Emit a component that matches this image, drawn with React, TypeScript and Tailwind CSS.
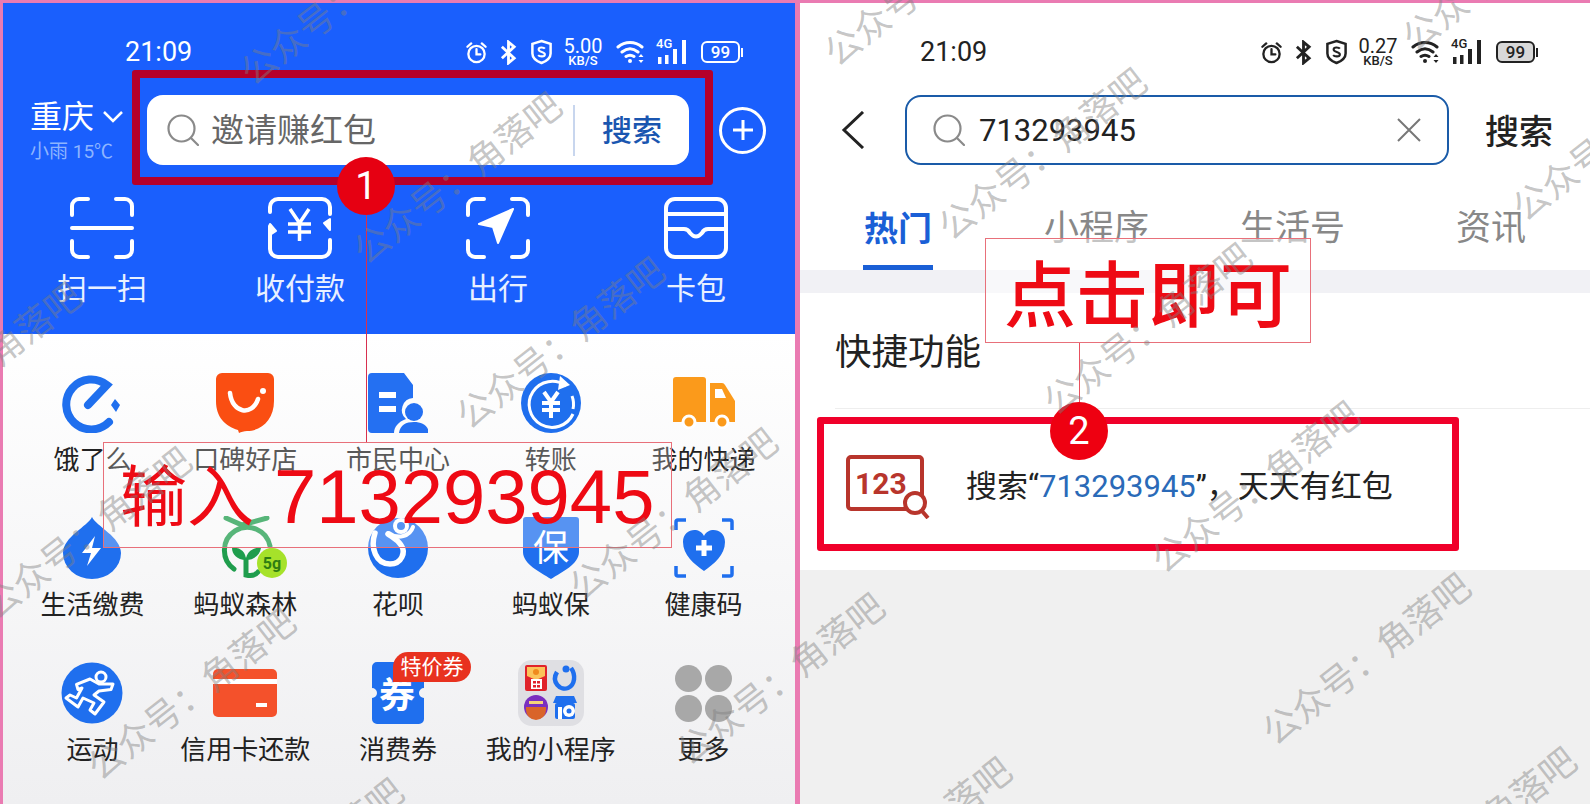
import React from "react";

function Alarm() {
  return (
    <svg viewBox="0 0 24 24" className="w-[23px] h-[25px]" fill="none" stroke="currentColor" strokeWidth="2.4">
      <circle cx="12" cy="13.5" r="8.5" />
      <path d="M12 8.500v5.500h4M2.500 6l4-3.500M21.500 6l-4-3.500" strokeLinecap="round" />
    </svg>
  );
}

function Bluetooth() {
  return (
    <svg viewBox="0 0 18 26" className="w-[17px] h-[25px]" fill="none" stroke="currentColor" strokeWidth="3">
      <path d="M2 7l13 12-6 5V2l6 5L2 19" />
    </svg>
  );
}

function ShieldS() {
  return (
    <svg viewBox="0 0 24 26" className="w-[23px] h-[26px]" fill="none" stroke="currentColor" strokeWidth="2.600">
      <path d="M12 1.500l9.500 3v10c0 5-4.500 8-9.500 10-5-2-9.500-5-9.500-10v-10z" />
      <path d="M15.500 9.500c-1-1.500-6.500-2-6.500 1 0 3 6.500 2 6.500 5 0 2.800-5.500 2.500-7 .8" strokeWidth="2.200" />
    </svg>
  );
}

function Wifi() {
  return (
    <svg viewBox="0 0 30 24" className="w-[30px] h-[24px]" fill="none" stroke="currentColor" strokeWidth="3" strokeLinecap="round">
      <path d="M2 7c7-6 17-6 24 0M6 12c5-4 11-4 16 0M10 16.500c3-2 5-2 8 0" />
      <circle cx="14" cy="21" r="2" fill="currentColor" stroke="none" />
      <path d="M25 14l2.500 3h-5zM25 23l2.500-3h-5z" fill="currentColor" stroke="none" />
    </svg>
  );
}

function Signal() {
  return (
    <div className="relative w-[33px] h-[24px]">
      <span className="absolute left-0 top-[-3px] text-[13px] leading-[14px] font-medium">4G</span>
      <svg viewBox="0 0 33 24" className="w-[33px] h-[24px]" fill="currentColor">
        <rect x="2" y="17" width="3.500" height="7" />
        <rect x="9" y="15" width="3.500" height="9" />
        <rect x="17" y="9" width="4" height="15" />
        <rect x="26" y="0" width="4" height="24" />
      </svg>
    </div>
  );
}

function StatusBar({ speed, light }: { speed: string; light: boolean }) {
  return (
    <div className={`flex items-center h-[36px] pr-[52px] ${light ? "text-white" : "text-[#222222]"}`}>
      <span className="ml-[122px] text-[27px] leading-[36px]">21:09</span>
      <div className="ml-auto flex items-center">
        <Alarm />
        <div className="ml-[12px]"><Bluetooth /></div>
        <div className="ml-[13px]"><ShieldS /></div>
        <div className="ml-[10px] w-[40px] flex flex-col items-center">
          <span className="text-[20px] leading-[17px]">{speed}</span>
          <span className="text-[13px] leading-[12px] font-medium">KB/S</span>
        </div>
        <div className="ml-[13px]"><Wifi /></div>
        <div className="ml-[10px]"><Signal /></div>
        <div className="ml-[12px] flex items-center">
          <div className={`w-[39px] h-[22px] rounded-[6px] border-2 border-current flex items-center justify-center text-[17px] leading-none font-medium ${light ? "" : "bg-[#d8d8d8]"}`}>
            99
          </div>
          <div className="ml-[1px] w-[2px] h-[9px] bg-current" />
        </div>
      </div>
    </div>
  );
}

function SearchIcon() {
  return (
    <svg viewBox="0 0 32 32" className="w-[32px] h-[32px]" fill="none" stroke="#8a8a8a" strokeWidth="2.200">
      <circle cx="14.500" cy="14.500" r="13" />
      <path d="M24 24l7 7" strokeLinecap="round" />
    </svg>
  );
}

function QuickIcon({ name }: { name: string }) {
  const corners = "M2 18V9a7 7 0 0 1 7-7h9M46 2h9a7 7 0 0 1 7 7v9M2 44v9a7 7 0 0 0 7 7h9M46 60h9a7 7 0 0 0 7-7v-9";
  return (
    <svg viewBox="0 0 64 62" className="w-[64px] h-[62px]" fill="none" stroke="white" strokeWidth="4" strokeLinecap="round" strokeLinejoin="round">
      {name === "scan" && <path d={`${corners}M2 31h60`} />}
      {name === "pay" && (
        <>
          <path d="M2 15v-5a8 8 0 0 1 8-8h44a8 8 0 0 1 8 8v7M62 43v9a8 8 0 0 1-8 8H10a8 8 0 0 1-8-8V29" />
          <path d="M62 22v11l-6-7zM2 38V27l6 7z" fill="white" strokeWidth="2" />
          <path d="M22 12l9.500 14L41 12M20 27h23M20 35h23M31.500 27v17" strokeWidth="3.500" strokeLinecap="butt" />
        </>
      )}
      {name === "go" && (
        <>
          <path d={corners} />
          <path d="M47 12L13 27l14 3 5 16z" fill="white" strokeWidth="2" />
        </>
      )}
      {name === "wallet" && (
        <>
          <rect x="2" y="2" width="60" height="58" rx="9" />
          <path d="M2 17h60M2 32h18q4 0 6 4 6 7 12 0 2-4 6-4h18" />
        </>
      )}
    </svg>
  );
}

function GridIcon({ name }: { name: string }) {
  if (name === "ele")
    return (
      <svg viewBox="0 0 60 60" className="w-[60px] h-[60px]" fill="none" stroke="#1f6fee" strokeWidth="8" strokeLinecap="round">
        <path d="M47 49A25 25 0 1 1 45 12L26 32" />
        <path d="M53 26l5 6-4 7-5-7z" fill="#1f6fee" stroke="none" />
      </svg>
    );
  if (name === "koubei")
    return (
      <svg viewBox="0 0 60 60" className="w-[60px] h-[60px]">
        <path d="M7 0h46a6 6 0 0 1 6 6v22c0 18-12 30-27 30-3 0-6 1-8 2l-1-3C10 53 1 44 1 28V6a6 6 0 0 1 6-6z" fill="#fa4e12" />
        <path d="M15 20c2 20 22 24 28 6" fill="none" stroke="white" strokeWidth="4.500" strokeLinecap="round" />
        <circle cx="48" cy="18" r="3" fill="white" />
      </svg>
    );
  if (name === "citizen")
    return (
      <svg viewBox="0 0 60 60" className="w-[60px] h-[60px]">
        <path d="M4 0h32l9 12v13a12 12 0 0 0-7 21c-8 3-12 8-12 14H4a4 4 0 0 1-4-4V4a4 4 0 0 1 4-4z" fill="#2470f2" />
        <rect x="11" y="19" width="17" height="6" fill="white" />
        <rect x="11" y="33" width="17" height="6" fill="white" />
        <circle cx="46" cy="39" r="9" fill="#2470f2" />
        <path d="M31 60c1-8 7-11 15-11s14 3 15 11z" fill="#2470f2" />
      </svg>
    );
  if (name === "transfer")
    return (
      <svg viewBox="0 0 62 62" className="w-[62px] h-[62px]">
        <circle cx="31" cy="31" r="30" fill="#1f6fee" />
        <path d="M46 14A23 23 0 1 0 53 42" fill="none" stroke="white" strokeWidth="3" />
        <path d="M40 4l10 9-12 5z" fill="white" />
        <path d="M52 24a22 22 0 0 1 1 13" fill="none" stroke="white" strokeWidth="3" />
        <path d="M24 20l7 10 7-10M22 31h18M22 38h18M31 30v16" fill="none" stroke="white" strokeWidth="4" />
      </svg>
    );
  if (name === "truck")
    return (
      <svg viewBox="0 0 62 52" className="w-[62px] h-[52px]">
        <path d="M3 0h27a3 3 0 0 1 3 3v42H0V3a3 3 0 0 1 3-3z" fill="#fb9a1b" />
        <path d="M37 6h12a4 4 0 0 1 3 2l10 16v21H37z" fill="#fb9a1b" />
        <path d="M42 12h7l4 9H42z" fill="white" />
        <circle cx="16" cy="45" r="6" fill="#fb9a1b" stroke="white" strokeWidth="3" />
        <circle cx="49" cy="45" r="6" fill="#fb9a1b" stroke="white" strokeWidth="3" />
      </svg>
    );
  if (name === "drop")
    return (
      <svg viewBox="0 0 58 62" className="w-[58px] h-[62px]">
        <path d="M29 0c4 9 29 20 29 36a29 26 0 0 1-58 0C0 20 25 9 29 0z" fill="#1f6fee" />
        <path d="M32 19L19 36h9l-4 13 14-18h-9z" fill="white" />
      </svg>
    );
  if (name === "forest")
    return (
      <svg viewBox="0 0 72 64" className="w-[72px] h-[64px] translate-x-[8px]">
        <g fill="none" stroke="#1f9d4d" strokeWidth="5" strokeLinecap="round">
          <path d="M17 53A23 23 0 1 1 53 30" />
          <path d="M9 2l16 7 25-7" />
          <path d="M29 44v15q8 2 12-3" />
        </g>
        <path d="M29 44c-9 0-14-6-14-12 8-1 14 4 14 12zM29 44c9 0 14-6 15-12-8-1-15 4-15 12z" fill="#1f9d4d" />
        <circle cx="55" cy="47" r="15" fill="#a6e22a" />
        <text x="55" y="53" textAnchor="middle" fontSize="16" fontWeight="700" fill="#2f7d12">5g</text>
      </svg>
    );
  if (name === "huabei")
    return (
      <svg viewBox="0 0 60 60" className="w-[60px] h-[60px]">
        <circle cx="30" cy="30" r="30" fill="#1f6fee" />
        <path d="M7 15C2 30 8 46 22 46c12 0 16-12 11-19-4-6-9-8-13-11" fill="none" stroke="white" strokeWidth="5.500" strokeLinecap="round" />
        <path d="M21 15c9 7 21 3 24-6" fill="none" stroke="white" strokeWidth="4" strokeLinecap="round" />
        <circle cx="33" cy="8" r="8" fill="white" />
        <circle cx="33" cy="8" r="4" fill="#1f6fee" />
      </svg>
    );
  if (name === "shield")
    return (
      <svg viewBox="0 0 56 62" className="w-[56px] h-[62px]">
        <path d="M3 0h50a3 3 0 0 1 3 3v32c0 12-17 20-28 27C17 55 0 47 0 35V3a3 3 0 0 1 3-3z" fill="#1f6fee" />
        <text x="28" y="44" textAnchor="middle" fontSize="36" fill="white">保</text>
      </svg>
    );
  if (name === "health")
    return (
      <svg viewBox="0 0 60 60" className="w-[60px] h-[60px]" fill="none">
        <path d="M2 12V4a2 2 0 0 1 2-2h8M48 2h8a2 2 0 0 1 2 2v8M2 48v8a2 2 0 0 0 2 2h8M48 58h8a2 2 0 0 0 2-2v-8" stroke="#1f6fee" strokeWidth="3.500" />
        <path d="M30 53C20 46 9 37 9 24c0-13 16-16 21-6 5-10 21-7 21 6 0 13-11 22-21 29z" fill="#1f6fee" />
        <path d="M30 22v16M22 30h16" stroke="white" strokeWidth="5" />
      </svg>
    );
  if (name === "sport")
    return (
      <svg viewBox="0 0 62 62" className="w-[62px] h-[62px]">
        <circle cx="31" cy="31" r="30.500" fill="#1f6fee" />
        <circle cx="40" cy="15" r="5" fill="none" stroke="white" strokeWidth="3" />
        <path d="M15.500 22.400L29 17l9 5h14l-2 5.500L38 29l-5 4 10 7-9 12-5-4 4-7-11-5-5 9-12-9 4-3 6.500 3 5.500-10-4 1.500z" fill="#1f6fee" stroke="white" strokeWidth="3" strokeLinejoin="round" />
      </svg>
    );
  if (name === "card")
    return (
      <svg viewBox="0 0 64 48" className="w-[64px] h-[48px]">
        <rect width="64" height="48" rx="5" fill="#f4512b" />
        <rect y="10" width="64" height="5" fill="white" />
        <rect x="43" y="34" width="11" height="4" fill="white" />
      </svg>
    );
  if (name === "coupon")
    return (
      <svg viewBox="0 0 52 62" className="w-[52px] h-[62px]">
        <path d="M5 0h42a5 5 0 0 1 5 5v21a5 5 0 0 0 0 10v21a5 5 0 0 1-5 5H5a5 5 0 0 1-5-5V36a5 5 0 0 0 0-10V5a5 5 0 0 1 5-5z" fill="#1f6fee" />
        <text x="25" y="46" textAnchor="middle" fontSize="36" fontWeight="700" fill="white">券</text>
      </svg>
    );
  if (name === "mini")
    return (
      <svg viewBox="0 0 66 66" className="w-[66px] h-[66px]">
        <rect width="66" height="66" rx="14" fill="#dfdfe3" />
        <rect x="7" y="5" width="22" height="26" rx="2" fill="#e0232b" />
        <path d="M9 7h18v9l-9 4-9-4z" fill="#fbc35a" />
        <circle cx="18" cy="12" r="3" fill="#f08a1d" />
        <rect x="13" y="19" width="11" height="10" fill="white" />
        <rect x="15" y="21" width="3" height="2.500" fill="#e0232b" />
        <rect x="19" y="21" width="3" height="2.500" fill="#e0232b" />
        <rect x="15" y="25" width="3" height="2.500" fill="#e0232b" />
        <rect x="19" y="25" width="3" height="2.500" fill="#e0232b" />
        <path d="M39 12c-6 10 3 19 11 16 7-3 8-13 3-20" fill="none" stroke="#1f6fee" strokeWidth="4.500" />
        <circle cx="48" cy="9" r="3.500" fill="#1f6fee" />
        <circle cx="18" cy="47" r="12" fill="#7a2fc0" />
        <path d="M8 47h20v3a10 10 0 0 1-20 0z" fill="#d9642a" />
        <rect x="11" y="41" width="14" height="3" fill="#f4d27a" />
        <path d="M38 36h18l3 7H35z" fill="#1f6fee" />
        <rect x="37" y="43" width="20" height="16" rx="2" fill="#1f6fee" />
        <rect x="40" y="47" width="4" height="12" fill="white" />
        <circle cx="51" cy="51" r="6" fill="white" />
        <circle cx="51" cy="51" r="2.500" fill="#1f6fee" />
      </svg>
    );
  return (
    <div className="grid grid-cols-2 gap-[3px] w-[57px]">
      <div className="w-[27px] h-[27px] rounded-full bg-[#a8a8a8]" />
      <div className="w-[27px] h-[27px] rounded-full bg-[#a8a8a8]" />
      <div className="w-[27px] h-[27px] rounded-full bg-[#a8a8a8]" />
      <div className="w-[27px] h-[27px] rounded-full bg-[#a8a8a8]" />
    </div>
  );
}

const quick = [
  { name: "scan", label: "扫一扫" },
  { name: "pay", label: "收付款" },
  { name: "go", label: "出行" },
  { name: "wallet", label: "卡包" },
];

const services = [
  { name: "ele", label: "饿了么" },
  { name: "koubei", label: "口碑好店" },
  { name: "citizen", label: "市民中心" },
  { name: "transfer", label: "转账" },
  { name: "truck", label: "我的快递" },
  { name: "drop", label: "生活缴费" },
  { name: "forest", label: "蚂蚁森林" },
  { name: "huabei", label: "花呗" },
  { name: "shield", label: "蚂蚁保" },
  { name: "health", label: "健康码" },
  { name: "sport", label: "运动" },
  { name: "card", label: "信用卡还款" },
  { name: "coupon", label: "消费券" },
  { name: "mini", label: "我的小程序" },
  { name: "more", label: "更多" },
];

const watermarks = [
  "left-[345px] top-[0px]",
  "left-[458px] top-[179px]",
  "left-[561px] top-[344px]",
  "left-[674px] top-[515px]",
  "left-[781px] top-[680px]",
  "left-[-22px] top-[369px]",
  "left-[88px] top-[534px]",
  "left-[192px] top-[695px]",
  "left-[300px] top-[865px]",
  "left-[929px] top-[-19px]",
  "left-[1043px] top-[155px]",
  "left-[1148px] top-[330px]",
  "left-[1256px] top-[488px]",
  "left-[1367px] top-[660px]",
  "left-[1473px] top-[834px]",
  "left-[908px] top-[844px]",
  "left-[1507px] top-[-34px]",
  "left-[1617px] top-[136px]",
];

function LeftPanel() {
  return (
    <div className="w-[792px] h-[801px] flex flex-col">
      <div className="h-[331px] shrink-0 bg-[#1a5ffd] flex flex-col">
        <div className="pt-[31px]">
          <StatusBar speed="5.00" light />
        </div>
        <div className="mt-[25px] h-[70px] flex items-center">
          <div className="w-[144px] pl-[27px] text-white">
            <div className="flex items-center">
              <span className="text-[32px] leading-[40px]">重庆</span>
              <svg viewBox="0 0 20 12" className="ml-[9px] w-[20px] h-[12px]" fill="none" stroke="white" strokeWidth="2.500">
                <path d="M1 1l9 9 9-9" />
              </svg>
            </div>
            <div className="mt-[3px] text-[19px] leading-[24px] text-[#8db4ff]">小雨 15℃</div>
          </div>
          <div className="w-[542px] h-[70px] rounded-[16px] bg-white flex items-center pl-[20px]">
            <SearchIcon />
            <span className="ml-[12px] mt-[2px] text-[33px] leading-[40px] text-[#666666]">邀请赚红包</span>
            <div className="ml-auto w-[2px] h-[51px] bg-[#c8d6ee]" />
            <span className="ml-[27px] mr-[27px] mt-[2px] text-[30px] leading-[40px] font-medium text-[#1a56b0]">搜索</span>
          </div>
          <div className="ml-[30px] w-[47px] h-[47px] rounded-full border-[3px] border-white flex items-center justify-center">
            <svg viewBox="0 0 20 20" className="w-[20px] h-[20px]" stroke="white" strokeWidth="3">
              <path d="M10 0v20M0 10h20" />
            </svg>
          </div>
        </div>
        <div className="mt-[32px] grid grid-cols-4">
          {quick.map((q) => (
            <div key={q.name} className="flex flex-col items-center">
              <QuickIcon name={q.name} />
              <span className="mt-[14px] text-[30px] leading-[32px] text-[#e8f0ff]">{q.label}</span>
            </div>
          ))}
        </div>
      </div>
      <div className="flex-1 min-h-0 overflow-hidden bg-linear-to-b from-white to-[#efeff1] pt-[39px] pl-[13px] pr-[15px] grid grid-cols-5 content-start">
        {services.map((s) => (
          <div key={s.name} className="h-[145px] flex flex-col items-center">
            <div className="relative h-[60px] flex items-center justify-center">
              <GridIcon name={s.name} />
              {s.name === "coupon" && (
                <span className="absolute left-[21px] top-[-11px] w-[78px] h-[30px] rounded-[15px] rounded-bl-none bg-[#e8321f] text-white text-[21px] leading-[30px] text-center">
                  特价券
                </span>
              )}
            </div>
            <span className="mt-[12px] text-[26px] leading-[30px] text-[#222222] whitespace-nowrap">{s.label}</span>
          </div>
        ))}
      </div>
    </div>
  );
}

function RightPanel() {
  return (
    <div className="flex-1 flex flex-col bg-[#f0f0f0]">
      <div className="bg-white h-[567px] flex flex-col">
        <div className="pt-[31px]">
          <div className="ml-[-2px]">
            <StatusBar speed="0.27" light={false} />
          </div>
        </div>
        <div className="mt-[25px] h-[70px] flex items-center">
          <svg viewBox="0 0 24 38" className="ml-[41px] w-[24px] h-[38px]" fill="none" stroke="#222222" strokeWidth="3">
            <path d="M22 1L3 19l19 18" />
          </svg>
          <div className="ml-[40px] w-[544px] h-[70px] rounded-[16px] border-2 border-[#1a5ba8] flex items-center pl-[26px] pr-[26px]">
            <SearchIcon />
            <span className="ml-[14px] mt-[2px] text-[31px] leading-[40px] text-[#222222]">713293945</span>
            <svg viewBox="0 0 24 24" className="ml-auto w-[24px] h-[24px]" fill="none" stroke="#777777" strokeWidth="2">
              <path d="M1 1l22 22M23 1L1 23" />
            </svg>
          </div>
          <span className="ml-[36px] mt-[3px] text-[34px] leading-[40px] font-medium text-[#222222]">搜索</span>
        </div>
        <div className="mt-[35px] h-[70px] flex pl-[63px] relative">
          <div className="w-[70px] h-[70px] border-b-[5px] border-[#1a5fd6] text-center text-[34px] leading-[58px] font-bold text-[#1a5fd6]">热门</div>
          <span className="ml-[111px] text-[35px] leading-[58px] text-[#888888]">小程序</span>
          <span className="ml-[91px] text-[35px] leading-[58px] text-[#888888]">生活号</span>
          <span className="ml-[111px] text-[35px] leading-[58px] text-[#888888]">资讯</span>
        </div>
        <div className="h-[23px] bg-[#f1f1f5]" />
        <div className="ml-[35px] h-[116px] border-b border-[#eeeeee] flex items-center">
          <span className="mt-[5px] text-[36.500px] leading-[44px] text-[#222222]">快捷功能</span>
        </div>
        <div className="flex-1 flex items-center pl-[46px] pb-[6px]">
          <svg viewBox="0 0 84 64" className="w-[84px] h-[64px]" fill="none">
            <rect x="2" y="2" width="74" height="52" rx="3" stroke="#b8352c" strokeWidth="4" />
            <text x="9" y="39" fontSize="30" fontWeight="700" fill="#b8352c">123</text>
            <circle cx="69" cy="48" r="10" fill="white" stroke="#b8352c" strokeWidth="4" />
            <path d="M76 56l6 7" stroke="#b8352c" strokeWidth="4" />
          </svg>
          <span className="ml-[36px] text-[31px] leading-[40px] text-[#222222] whitespace-nowrap">
            搜索“<span className="text-[#2a6ab8]">713293945</span>”，天天有红包
          </span>
        </div>
      </div>
    </div>
  );
}

export default function App() {
  return (
    <div className="relative w-[1590px] h-[804px] overflow-hidden bg-[#ea7bb2] pt-[3px] pl-[3px] flex gap-[5px] font-['Roboto','Noto_Sans_CJK_SC',sans-serif]">
      <LeftPanel />
      <RightPanel />

      {/* annotations drawn over the screenshots */}
      <div className="absolute left-[132px] top-[70px] w-[581px] h-[115px] border-[8px] border-[#b5002a] rounded-[3px]" />
      <div className="absolute left-[366px] top-[215px] w-[1px] h-[227px] bg-[#d8304e]" />
      <div className="absolute left-[337px] top-[157px] w-[58px] h-[58px] rounded-full bg-[#e60012] text-white text-[38px] leading-[58px] text-center">1</div>
      <div className="absolute left-[103px] top-[442px] w-[569px] h-[106px] border border-[#e8707a] bg-white/25 flex items-center pl-[16px] pt-[4px] font-['Liberation_Sans','Noto_Sans_CJK_SC',sans-serif] text-[76px] leading-none text-[#ee0a14] whitespace-nowrap">
        <span className="text-[67px]">输入</span>
        <span className="ml-[20px]">713293945</span>
      </div>

      <div className="absolute left-[985px] top-[238px] w-[326px] h-[105px] border border-[#e8707a] bg-white/50 flex items-center justify-center pt-[12px] text-[72px] leading-none font-medium text-[#ee0a14] whitespace-nowrap">
        点击即可
      </div>
      <div className="absolute left-[1079px] top-[343px] w-[1px] h-[60px] bg-[#e8505e]" />
      <div className="absolute left-[817px] top-[417px] w-[642px] h-[134px] border-[7px] border-[#f0002a] rounded-[3px]" />
      <div className="absolute left-[1050px] top-[402px] w-[58px] h-[58px] rounded-full bg-[#ee0011] text-white text-[38px] leading-[58px] text-center">2</div>

      {watermarks.map((pos) => (
        <div
          key={pos}
          className={`absolute ${pos} -translate-x-1/2 -translate-y-1/2 -rotate-[38deg] text-[36px] leading-none whitespace-nowrap text-[#808080]/45 pointer-events-none`}
        >
          公众号：角落吧
        </div>
      ))}
    </div>
  );
}
